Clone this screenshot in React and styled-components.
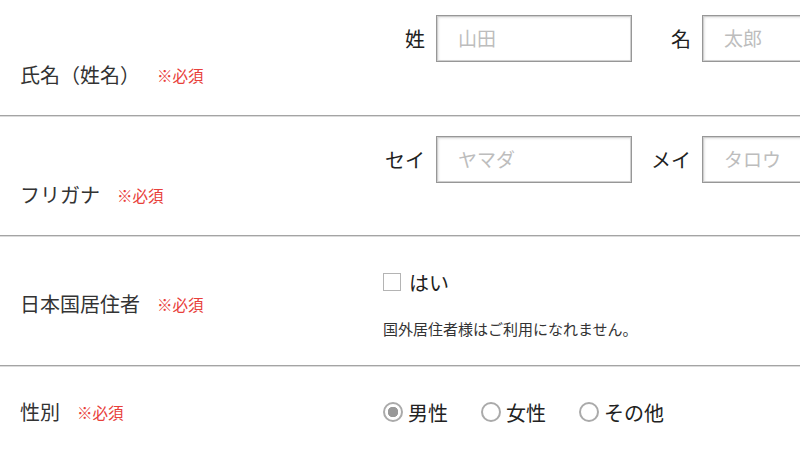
import styled, { createGlobalStyle } from "styled-components";

const GlobalStyle = createGlobalStyle`
  html, body {
    margin: 0;
    padding: 0;
    background: #fff;
    overflow: hidden;
  }
  body {
    font-family: "Noto Sans CJK JP", "Noto Sans", sans-serif;
    color: #333;
  }
`

const Form = styled.form`
  width: 800px;
  overflow: hidden;
`

const Row = styled.div`
  display: grid;
  grid-template-columns: 383px 1fr;
  align-items: ${({ $align }) => $align || "center"};
  padding: ${({ $pad }) => $pad};
  border-bottom: 1px solid #a4a4a4;
  box-shadow: 0 1px 0 #dcdcdc;
`

const LabelCell = styled.div`
  display: flex;
  align-items: center;
  padding-left: 20px;
  margin-top: ${({ $offset }) => $offset || 0}px;
  line-height: 30px;
`

const LabelText = styled.span`
  font-size: 20px;
  color: #333;
  white-space: nowrap;
`

const Required = styled.span`
  margin-left: 17px;
  font-size: 15.5px;
  color: #e8403a;
  white-space: nowrap;
`

const Fields = styled.div`
  display: flex;
  align-items: center;
  white-space: nowrap;
`

const FieldLabel = styled.label`
  width: ${({ $w }) => $w || 40}px;
  margin-left: ${({ $gap }) => $gap || 0}px;
  margin-right: 11px;
  text-align: right;
  font-size: 20px;
  color: #222;
  flex-shrink: 0;
`

const TextInput = styled.input`
  box-sizing: border-box;
  width: 196px;
  height: 47px;
  flex-shrink: 0;
  padding: 0 0 2px 21px;
  border: 1px solid #979797;
  border-radius: 0;
  box-shadow: inset 0 0 0 1px #cfcfcf, inset 1px 1px 3px rgba(0, 0, 0, 0.18);
  font-family: inherit;
  font-size: 19px;
  color: #333;
  outline: none;
  &::placeholder {
    color: #bdbdbd;
  }
`

const Stack = styled.div`
  display: flex;
  flex-direction: column;
`

const CheckLine = styled.label`
  display: flex;
  align-items: center;
  height: 30px;
  font-size: 20px;
  color: #222;
`

const Checkbox = styled.input`
  appearance: none;
  box-sizing: border-box;
  width: 18px;
  height: 18px;
  margin: 0 8px 0 0;
  border: 1px solid #b4b4b4;
  background: #fff;
`

const Note = styled.p`
  margin: 21px 0 0;
  font-size: 15px;
  line-height: 22px;
  color: #333;
`

const RadioGroup = styled.div`
  display: flex;
  align-items: center;
  gap: 33px;
  height: 30px;
`

const RadioLabel = styled.label`
  display: flex;
  align-items: center;
  font-size: 20px;
  color: #222;
`

const Radio = styled.input`
  appearance: none;
  box-sizing: border-box;
  width: 20px;
  height: 20px;
  margin: 0 5px 0 0;
  border: 2px solid #aaa;
  border-radius: 50%;
  background: #fff;
  &:checked {
    background: radial-gradient(circle, #999 0 5px, #fff 5.5px);
  }
`

const App = () => {
  return (
    <>
      <GlobalStyle />
      <Form>
        <Row $align="start" $pad="15px 0 25px">
          <LabelCell $offset={45}>
            <LabelText>氏名（姓名）</LabelText>
            <Required>※必須</Required>
          </LabelCell>
          <Fields>
            <FieldLabel $w={42}>姓</FieldLabel>
            <TextInput placeholder="山田" />
            <FieldLabel $w={40} $gap={19}>名</FieldLabel>
            <TextInput placeholder="太郎" />
          </Fields>
        </Row>

        <Row $align="start" $pad="20px 0 25px">
          <LabelCell $offset={44}>
            <LabelText>フリガナ</LabelText>
            <Required>※必須</Required>
          </LabelCell>
          <Fields>
            <FieldLabel $w={42}>セイ</FieldLabel>
            <TextInput placeholder="ヤマダ" />
            <FieldLabel $w={40} $gap={19}>メイ</FieldLabel>
            <TextInput placeholder="タロウ" />
          </Fields>
        </Row>

        <Row $pad="31px 0 25px">
          <LabelCell>
            <LabelText>日本国居住者</LabelText>
            <Required>※必須</Required>
          </LabelCell>
          <Stack>
            <CheckLine>
              <Checkbox type="checkbox" />
              はい
            </CheckLine>
            <Note>国外居住者様はご利用になれません。</Note>
          </Stack>
        </Row>

        <Row $pad="31px 0 30px">
          <LabelCell>
            <LabelText>性別</LabelText>
            <Required>※必須</Required>
          </LabelCell>
          <RadioGroup>
            <RadioLabel>
              <Radio type="radio" name="gender" defaultChecked />
              男性
            </RadioLabel>
            <RadioLabel>
              <Radio type="radio" name="gender" />
              女性
            </RadioLabel>
            <RadioLabel>
              <Radio type="radio" name="gender" />
              その他
            </RadioLabel>
          </RadioGroup>
        </Row>
      </Form>
    </>
  );
};

export default App;
